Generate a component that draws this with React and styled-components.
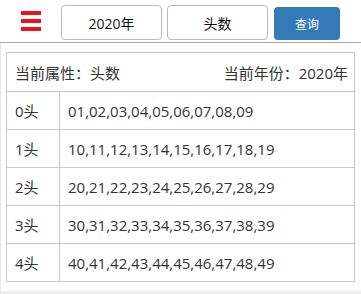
import React from "react";
import styled, { createGlobalStyle } from "styled-components";

const GlobalStyle = createGlobalStyle`
  html, body {
    margin: 0;
    padding: 0;
    background: #eeeeee;
    font-family: "Open Sans", "Noto Sans CJK SC", sans-serif;
    color: #333;
  }
`;

const rows = [
  { head: "0头", nums: "01,02,03,04,05,06,07,08,09" },
  { head: "1头", nums: "10,11,12,13,14,15,16,17,18,19" },
  { head: "2头", nums: "20,21,22,23,24,25,26,27,28,29" },
  { head: "3头", nums: "30,31,32,33,34,35,36,37,38,39" },
  { head: "4头", nums: "40,41,42,43,44,45,46,47,48,49" },
];

function App() {
  return (
    <>
      <GlobalStyle />
      <Page>
        <Header>
          <Menu aria-label="menu">
            <span />
            <span />
            <span />
          </Menu>
          <Choice>2020年</Choice>
          <Choice>头数</Choice>
          <SearchButton>查询</SearchButton>
        </Header>
        <Content>
          <Table>
            <TitleRow>
              <span>当前属性：头数</span>
              <span>当前年份：2020年</span>
            </TitleRow>
            {rows.map((r) => (
              <Row key={r.head}>
                <HeadCell>{r.head}</HeadCell>
                <NumCell>{r.nums}</NumCell>
              </Row>
            ))}
          </Table>
        </Content>
      </Page>
    </>
  );
}

export default App;

const Page = styled.div`
  width: 361px;
  background: #fff;
`;

const Header = styled.div`
  height: 42px;
  display: flex;
  align-items: center;
  border-bottom: 1px solid #a8a8a8;
  background: #fff;
`;

const Menu = styled.div`
  width: 20px;
  margin: 0 20px 0 21px;
  display: flex;
  flex-direction: column;
  gap: 4px;

  span {
    display: block;
    height: 4px;
    background: #e8141c;
  }
`;

const Choice = styled.div`
  width: 101px;
  height: 35px;
  box-sizing: border-box;
  margin-right: 5px;
  margin-top: 3px;
  border: 1px solid #b9b9b9;
  border-radius: 4px;
  display: flex;
  align-items: center;
  justify-content: center;
  font-size: 14px;
  color: #111;
`;

const SearchButton = styled.button`
  width: 66px;
  height: 33px;
  margin-left: 1px;
  margin-top: 5px;
  border: none;
  border-radius: 4px;
  background: #337ab7;
  color: #fff;
  font-family: inherit;
  font-size: 12px;
  padding: 0;
`;

const Content = styled.div`
  padding: 9px 6px 9px 5px;
  border-left: 1px solid #e6e6e6;
  box-sizing: border-box;
`;

const Table = styled.div`
  border: 1px solid #c8c8c8;
  font-size: 15px;
  color: #333;
`;

const TitleRow = styled.div`
  height: 38px;
  display: flex;
  align-items: center;
  justify-content: space-between;
  padding: 0 6px 0 8px;
`;

const Row = styled.div`
  height: 37px;
  display: flex;
  border-top: 1px solid #c8c8c8;
`;

const HeadCell = styled.div`
  width: 44px;
  padding-left: 8px;
  display: flex;
  align-items: center;
  border-right: 1px solid #c8c8c8;
`;

const NumCell = styled.div`
  flex: 1;
  padding-left: 8px;
  display: flex;
  align-items: center;
`;
